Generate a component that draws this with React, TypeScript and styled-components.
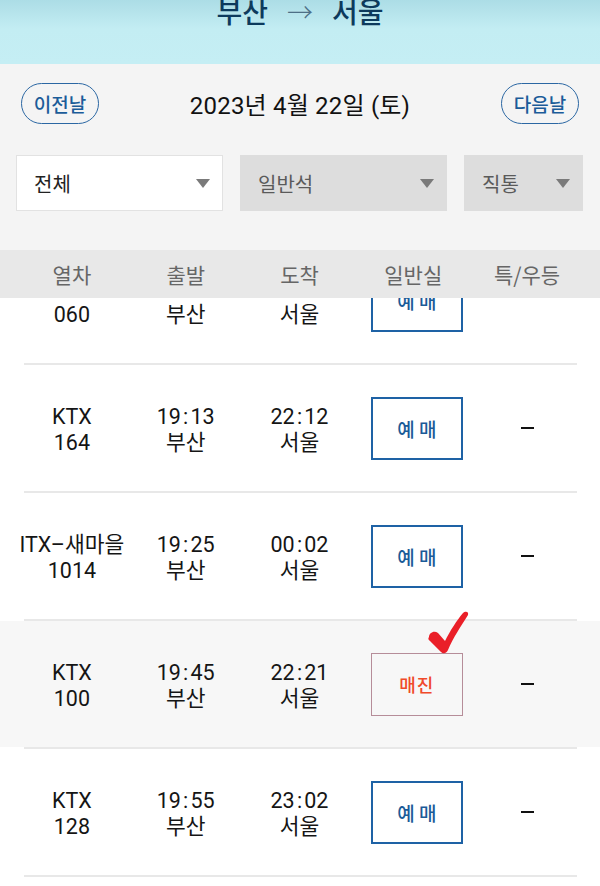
import React from "react";
import styled, { createGlobalStyle } from "styled-components";

const GlobalStyle = createGlobalStyle`
  html, body { margin: 0; padding: 0; background: #ffffff; }
  body { font-family: Roboto, "Noto Sans CJK KR", "Noto Sans", sans-serif; }
  * { box-sizing: border-box; }
`;

const Page = styled.div`
  width: 600px;
  height: 886px;
  overflow: hidden;
  display: flex;
  flex-direction: column;
  background: #ffffff;
`;

const Header = styled.header`
  height: 64px;
  flex: none;
  overflow: hidden;
  background: linear-gradient(180deg, #acdde6 0%, #c3edf3 45%, #c5eef4 100%);
  display: flex;
  justify-content: center;
  align-items: flex-start;
`;

const Title = styled.h1`
  margin: -5px 0 0;
  display: flex;
  align-items: center;
  gap: 19px;
  font-family: "Noto Sans CJK KR", sans-serif;
  font-size: 28px;
  line-height: 32px;
  font-weight: 500;
  color: #0d3a5c;
`;

const TitleArrow = styled.span`
  font-weight: 300;
  color: #4d6f86;
  font-size: 26px;
`;

const GraySection = styled.section`
  flex: none;
  background: #f4f4f4;
  padding-bottom: 39px;
`;

const DateBar = styled.div`
  height: 78px;
  display: flex;
  align-items: center;
  justify-content: space-between;
  padding: 0 21px 0 21px;
`;

const DayButton = styled.button`
  height: 41px;
  width: 78px;
  border-radius: 21px;
  border: 1.5px solid #2b67a3;
  background: transparent;
  color: #1b5c99;
  font-family: "Noto Sans CJK KR", sans-serif;
  font-size: 19px;
  font-weight: 500;
  padding: 0;
  display: flex;
  align-items: center;
  justify-content: center;
`;

const DateText = styled.div`
  font-family: Roboto, "Noto Sans CJK KR", sans-serif;
  font-size: 24px;
  color: #111111;
  letter-spacing: 0.2px;
`;

const Filters = styled.div`
  margin-top: 13px;
  display: grid;
  grid-template-columns: 207px 207px 119px;
  gap: 17px;
  padding: 0 16px;
`;

const Select = styled.div<{ $active?: boolean }>`
  height: 56px;
  display: flex;
  align-items: center;
  justify-content: space-between;
  padding: 0 12px 0 17px;
  background: ${(p) => (p.$active ? "#ffffff" : "#dddddd")};
  border: 1px solid ${(p) => (p.$active ? "#e2e2e2" : "#dddddd")};
  font-family: "Noto Sans CJK KR", sans-serif;
  font-size: 20px;
  color: ${(p) => (p.$active ? "#222222" : "#5a5a5a")};
`;

const Caret = styled.span`
  width: 0;
  height: 0;
  border-left: 7px solid transparent;
  border-right: 7px solid transparent;
  border-top: 9px solid #7a7a7a;
`;

const ColumnBar = styled.div`
  flex: none;
  height: 48px;
  background: #e8e8e8;
  display: grid;
  grid-template-columns: repeat(5, 1fr);
  padding: 0 16px 0 15px;
  align-items: center;
`;

const ColumnLabel = styled.div`
  text-align: center;
  font-family: "Noto Sans CJK KR", sans-serif;
  font-size: 21px;
  color: #666666;
`;

const ListViewport = styled.div`
  flex: 1;
  overflow: hidden;
  background: #ffffff;
`;

const List = styled.div`
  margin-top: -61px;
`;

const Row = styled.div<{ $soldOut?: boolean }>`
  height: 126px;
  display: grid;
  grid-template-columns: repeat(5, 1fr);
  padding: 0 16px 0 15px;
  align-items: center;
  background: ${(p) => (p.$soldOut ? "#f7f7f7" : "#ffffff")};
`;

const Divider = styled.div`
  height: 2px;
  margin: 0 23px 0 24px;
  background: #e8e8e8;
`;

const Cell = styled.div`
  display: flex;
  flex-direction: column;
  align-items: center;
  justify-content: center;
  padding-top: 3px;
  font-family: Roboto, "Noto Sans CJK KR", sans-serif;
  font-size: 21.5px;
  line-height: 26px;
  color: #151515;
  white-space: nowrap;
`;

const ButtonCell = styled.div`
  display: flex;
  justify-content: center;
  position: relative;
`;

const BookButton = styled.button<{ $soldOut?: boolean }>`
  width: 92px;
  height: 63px;
  margin-left: 7px;
  background: transparent;
  border: ${(p) => (p.$soldOut ? "1px solid #b68d99" : "2px solid #1e62a5")};
  color: ${(p) => (p.$soldOut ? "#f04a2a" : "#1b5b98")};
  font-family: "Noto Sans CJK KR", sans-serif;
  font-size: ${(p) => (p.$soldOut ? "18px" : "19px")};
  font-weight: 500;
  letter-spacing: ${(p) => (p.$soldOut ? "1px" : "0")};
  padding: 0;
  display: flex;
  align-items: center;
  justify-content: center;
`;

const Dash = styled.span`
  display: block;
  width: 13px;
  height: 2px;
  background: #111111;
  margin-bottom: 4px;
`;

const CheckMark = styled.svg`
  position: absolute;
  left: 72px;
  top: -42px;
  width: 41px;
  height: 43px;
  pointer-events: none;
`;

type Train = {
  kind: string;
  no: string;
  dep: string;
  arr: string;
  soldOut?: boolean;
};

const trains: Train[] = [
  { kind: "KTX", no: "060", dep: "18:58", arr: "21:54" },
  { kind: "KTX", no: "164", dep: "19:13", arr: "22:12" },
  { kind: "ITX–새마을", no: "1014", dep: "19:25", arr: "00:02" },
  { kind: "KTX", no: "100", dep: "19:45", arr: "22:21", soldOut: true },
  { kind: "KTX", no: "128", dep: "19:55", arr: "23:02" },
];

const fmt = (t: string) => t.replace(":", "\u200a:\u200a");

export default function App() {
  return (
    <>
      <GlobalStyle />
      <Page>
        <Header>
          <Title>
            <span>부산</span>
            <TitleArrow>→</TitleArrow>
            <span>서울</span>
          </Title>
        </Header>
        <GraySection>
          <DateBar>
            <DayButton>이전날</DayButton>
            <DateText>2023년 4월 22일 (토)</DateText>
            <DayButton>다음날</DayButton>
          </DateBar>
          <Filters>
            <Select $active>
              <span>전체</span>
              <Caret />
            </Select>
            <Select>
              <span>일반석</span>
              <Caret />
            </Select>
            <Select>
              <span>직통</span>
              <Caret />
            </Select>
          </Filters>
        </GraySection>
        <ColumnBar>
          <ColumnLabel>열차</ColumnLabel>
          <ColumnLabel>출발</ColumnLabel>
          <ColumnLabel>도착</ColumnLabel>
          <ColumnLabel>일반실</ColumnLabel>
          <ColumnLabel>특/우등</ColumnLabel>
        </ColumnBar>
        <ListViewport>
          <List>
            {trains.map((t, i) => (
              <React.Fragment key={i}>
                <Row $soldOut={t.soldOut}>
                  <Cell>
                    <span>{t.kind}</span>
                    <span>{t.no}</span>
                  </Cell>
                  <Cell>
                    <span>{fmt(t.dep)}</span>
                    <span>부산</span>
                  </Cell>
                  <Cell>
                    <span>{fmt(t.arr)}</span>
                    <span>서울</span>
                  </Cell>
                  <ButtonCell>
                    <BookButton $soldOut={t.soldOut}>
                      {t.soldOut ? "매진" : "예 매"}
                    </BookButton>
                    {t.soldOut && (
                      <CheckMark viewBox="0 0 41 43">
                        <path
                          d="M1 26 C1 22 6 19 10 22 L17 30 C22 20 29 9 35 2 C37 0 41 0 40 4 C33 15 25 27 20 39 C18 43 15 43 13 41 L2 30 C0 29 0 27 1 26 Z"
                          fill="#ea1f28"
                        />
                      </CheckMark>
                    )}
                  </ButtonCell>
                  <Cell>{i === 0 ? null : <Dash />}</Cell>
                </Row>
                <Divider />
              </React.Fragment>
            ))}
          </List>
        </ListViewport>
      </Page>
    </>
  );
}
